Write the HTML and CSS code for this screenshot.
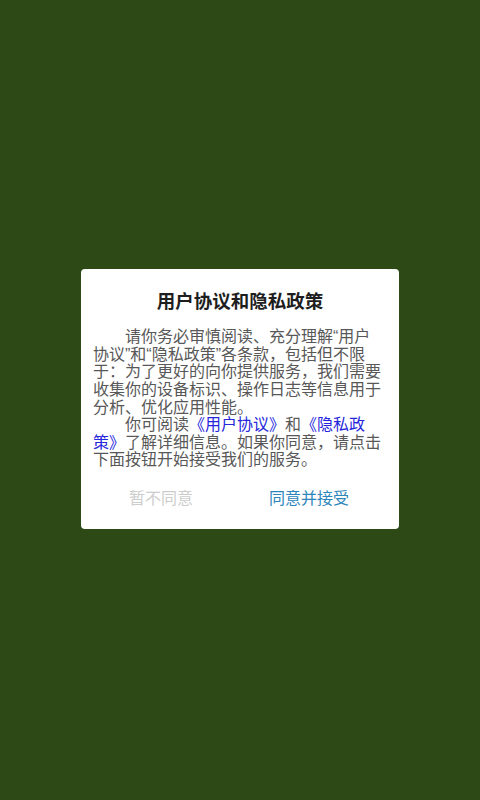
FILE: index.html
```html
<!DOCTYPE html>
<html lang="zh-CN">
<head>
    <meta charset="UTF-8">
    <meta name="viewport" content="width=device-width, initial-scale=1.0">
    <title>用户协议和隐私政策</title>
    <link rel="stylesheet" href="styles.css">
</head>
<body>

    <div class="dialog">
        <h2 class="dialog-title">用户协议和隐私政策</h2>

        <div class="dialog-body">
            <p>请你务必审慎阅读、充分理解“用户协议”和“隐私政策”各条款，包括但不限于：为了更好的向你提供服务，我们需要收集你的设备标识、操作日志等信息用于分析、优化应用性能。</p>
            <p>你可阅读<a href="#" class="link">《用户协议》</a>和<a href="#" class="link">《隐私政策》</a>了解详细信息。如果你同意，请点击下面按钮开始接受我们的服务。</p>
        </div>

        <div class="dialog-buttons">
            <button class="btn btn-cancel">暂不同意</button>
            <button class="btn btn-ok">同意并接受</button>
        </div>
    </div>

</body>
</html>
```

FILE: styles.css
```css
body {
    font-family: "Liberation Sans", "Noto Sans CJK SC", sans-serif;
    background-color: #2d4a16;
    margin: 0;
    padding: 0;
    min-height: 100vh;
    display: flex;
    align-items: center;
    justify-content: center;
}
.dialog {
    width: 318px;
    background-color: #fff;
    border-radius: 4px;
    padding: 19px 0 20px;
    margin-top: -2px;
}
.dialog-title {
    margin: 0;
    font-family: "Noto Sans CJK SC", sans-serif;
    font-size: 18.5px;
    line-height: 24px;
    font-weight: bold;
    color: #1e1e1e;
    text-align: center;
}
.dialog-body {
    margin-top: 16px;
    padding: 0 16px 0 12px;
    font-size: 16px;
    line-height: 17.6px;
    color: #585858;
}
.dialog-body p {
    margin: 0;
    text-indent: 2em;
}
.link {
    color: #2626dc;
    text-decoration: none;
}
.dialog-buttons {
    margin-top: 16px;
    padding: 0 50px 0 48px;
    display: flex;
    justify-content: space-between;
}
.btn {
    background: none;
    border: none;
    padding: 0;
    font-family: "Noto Sans CJK SC", sans-serif;
    font-size: 16px;
    line-height: 24px;
    cursor: pointer;
}
.btn-cancel {
    color: #cdcdcd;
}
.btn-ok {
    color: #2d85bb;
}
```
